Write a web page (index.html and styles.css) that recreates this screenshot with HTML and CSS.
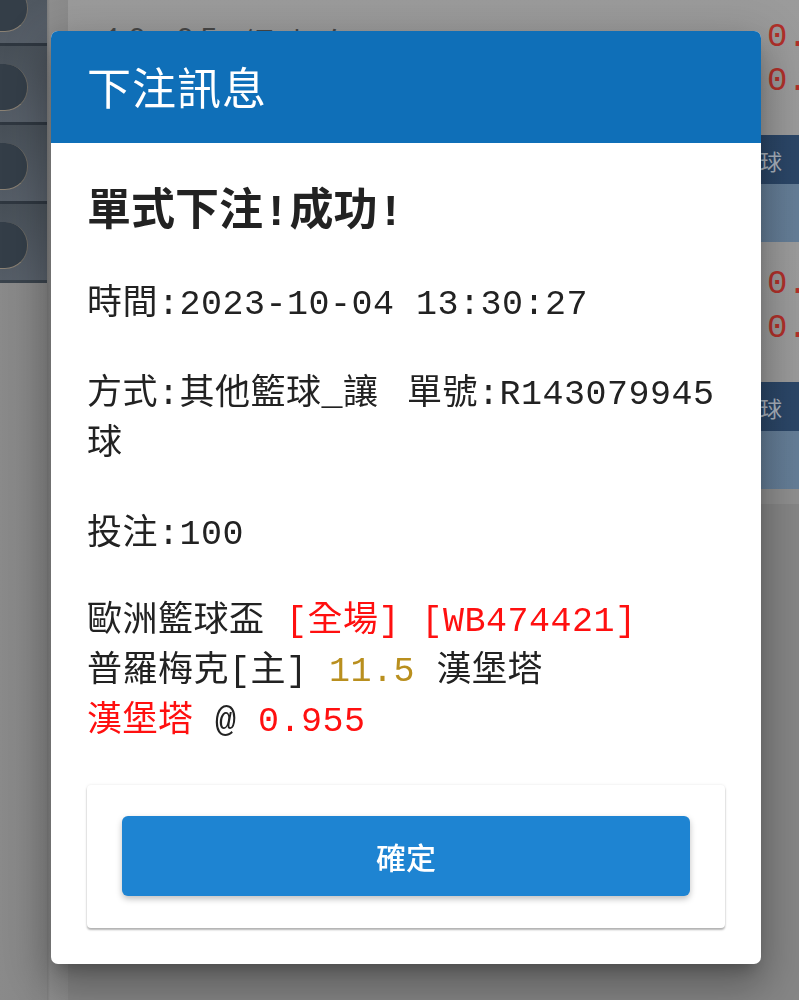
FILE: index.html
```html
<!DOCTYPE html>
<html lang="zh-Hant">
<head>
<meta charset="utf-8">
<title>下注訊息</title>
<link rel="stylesheet" href="styles.css">
</head>
<body>
<div class="page">
  <aside class="sidebar">
    <div class="side-item"><span class="pill"></span></div>
    <div class="side-item"><span class="pill"></span></div>
    <div class="side-item"><span class="pill"></span></div>
    <div class="side-item"><span class="pill"></span></div>
  </aside>
  <div class="gutter"></div>
  <main class="list">
    <div class="match match-first">
      <span class="m-time">10:05</span>
      <span class="m-team">鋼山白</span>
      <div class="m-odds"><span>0.955</span><span>0.925</span></div>
    </div>
    <div class="league"><span>籃球</span></div>
    <div class="sub"></div>
    <div class="match">
      <span class="m-time">11:30</span>
      <span class="m-team">普羅梅克</span>
      <div class="m-odds"><span>0.955</span><span>0.925</span></div>
    </div>
    <div class="league"><span>籃球</span></div>
    <div class="sub"></div>
    <div class="foot"></div>
  </main>
</div>

<section class="dialog">
  <header class="dialog-head">下注訊息</header>
  <div class="dialog-body">
    <h2 class="result">單式下注!成功!</h2>
    <p class="info">時間:2023-10-04 13:30:27</p>
    <div class="info pair">
      <span class="pair-type">方式:其他籃球_讓球</span>
      <span class="pair-no">單號:R143079945</span>
    </div>
    <p class="info">投注:100</p>
    <p class="info detail">歐洲籃球盃 <span class="red">[全場]</span> <span class="red">[WB474421]</span><br>普羅梅克[主] <span class="gold">11.5</span> 漢堡塔<br><span class="red">漢堡塔</span> @ <span class="red">0.955</span></p>
    <div class="actions">
      <button class="confirm" type="button">確定</button>
    </div>
  </div>
</section>
</body>
</html>
```

FILE: styles.css
```css
html, body {
  margin: 0;
  padding: 0;
}
body {
  width: 799px;
  height: 1000px;
  overflow: hidden;
  background: #858585;
  font-family: "Liberation Mono", "Noto Sans CJK TC", monospace;
}

.page {
  display: flex;
  height: 1000px;
}
.sidebar {
  width: 47px;
  flex: none;
  margin-top: -33px;
  background: linear-gradient(90deg, #8a8a8a, #868686);
  display: flex;
  flex-direction: column;
}
.side-item {
  height: 79px;
  box-sizing: border-box;
  border-bottom: 3px solid #2f3740;
  background: linear-gradient(160deg, #474f57 0%, #58606a 100%);
  display: flex;
  align-items: center;
  overflow: hidden;
  padding-top: 6px;
}
.side-item:last-child {
  border-bottom-color: #3a434c;
}
.pill {
  display: block;
  width: 60px;
  height: 46px;
  margin-left: -33px;
  border-radius: 23px;
  background: #343e48;
  border-bottom: 1px solid #8a8174;
  border-right: 1px solid #6d6a64;
}
.gutter {
  width: 21px;
  flex: none;
  background: linear-gradient(90deg, #7d7d7d 0, #8e8e8e 3px, #8b8b8b 100%);
}
.list {
  flex: 1;
  min-width: 0;
  display: flex;
  flex-direction: column;
}
.match {
  height: 140px;
  background: linear-gradient(180deg, #9b9b9b, #999999);
  display: flex;
  align-items: flex-start;
  color: #474747;
  font-size: 30px;
}
.match-first {
  margin-top: -5px;
}
.m-time {
  margin: 28px 0 0 36px;
  width: 140px;
  letter-spacing: 6px;
}
.m-team {
  margin-top: 24px;
  flex: 1;
  letter-spacing: 8px;
}
.m-odds {
  width: 32px;
  flex: none;
  padding-top: 20px;
  display: flex;
  flex-direction: column;
  color: #b0302a;
  font-size: 34px;
  line-height: 44px;
  white-space: nowrap;
}
.league {
  height: 49px;
  background: linear-gradient(90deg, #243d5c, #2b4667);
  display: flex;
  align-items: center;
  justify-content: flex-end;
  padding-right: 17px;
  color: #a9b2bd;
  font-family: "Noto Sans CJK TC", sans-serif;
  font-size: 22px;
}
.sub {
  height: 58px;
  background: linear-gradient(90deg, #566f8a, #647d96);
}
.foot {
  height: 15px;
  background: #8e8e8e;
}

/* dialog */
.dialog {
  position: fixed;
  left: 51px;
  top: 31px;
  width: 710px;
  background: #ffffff;
  border-radius: 7px;
  overflow: hidden;
  box-shadow: 0 11px 15px -7px rgba(0,0,0,.25), 0 24px 38px 3px rgba(0,0,0,.18), 0 9px 46px 8px rgba(0,0,0,.14);
  color: #222222;
}
.dialog-head {
  height: 112px;
  box-sizing: border-box;
  padding: 0 36px 2px;
  display: flex;
  align-items: center;
  background: #0f6fb8;
  color: #ffffff;
  font-family: "Noto Sans CJK TC", sans-serif;
  font-size: 44px;
  font-weight: 400;
  letter-spacing: 1px;
}
.dialog-body {
  padding: 44px 36px 36px;
}
.result {
  margin: 0;
  font-size: 44px;
  line-height: 53px;
  font-weight: 700;
}
.info {
  margin: 40px 0 0;
  font-size: 35px;
  line-height: 50px;
  letter-spacing: 0.5px;
}
.pair {
  display: flex;
  gap: 26px;
}
.pair-type {
  width: 294px;
  flex: none;
}
.pair-no {
  white-space: nowrap;
}
.detail {
  margin-top: 37px;
}
.red {
  color: #ff1010;
}
.gold {
  color: #b98f1e;
}
.actions {
  margin-top: 38px;
  padding: 31px 35px 32px;
  border-radius: 4px;
  background: #ffffff;
  box-shadow: 0 2px 2px rgba(0,0,0,.28), 0 0 3px rgba(0,0,0,.10);
}
.confirm {
  display: block;
  width: 100%;
  height: 80px;
  border: 0;
  border-radius: 6px;
  background: #1e84d2;
  color: #ffffff;
  font-family: "Noto Sans CJK TC", sans-serif;
  font-size: 30px;
  font-weight: 500;
  box-shadow: 0 3px 6px rgba(0,0,0,.25);
}
```
